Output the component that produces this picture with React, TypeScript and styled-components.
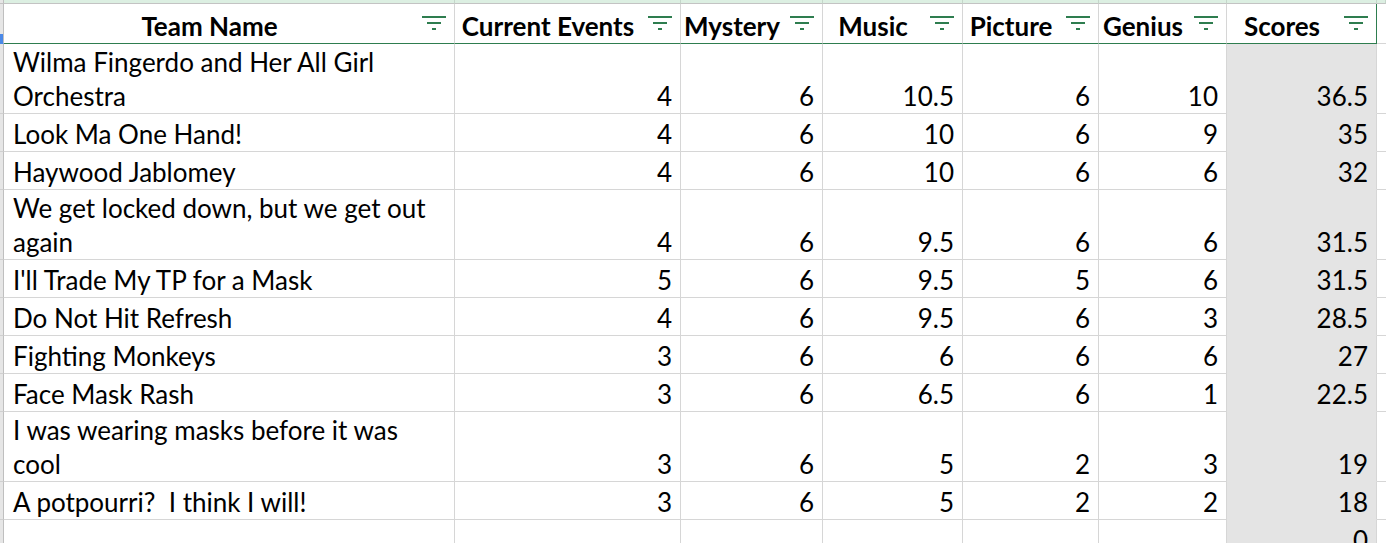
import React from "react";
import styled, { createGlobalStyle, css } from "styled-components";

const COLS = "4px 451px 226px 142px 140px 136px 128px 150px 1fr";
const GRID = "#d6d6d6";
const GREEN = "#2e7d4f";

const GlobalStyle = createGlobalStyle`
  html, body { margin: 0; padding: 0; background: #ffffff; overflow: hidden; }
  body { font-family: Lato, "Open Sans", sans-serif; color: #000; }
  * { box-sizing: border-box; }
`;

const Sheet = styled.div`
  display: flex;
  flex-direction: column;
  width: 1386px;
  height: 543px;
  overflow: hidden;
`;

const Row = styled.div<{ $h: number }>`
  display: grid;
  grid-template-columns: ${COLS};
  height: ${(p) => p.$h}px;
  flex: none;
`;

const StripCell = styled.div<{ $corner?: boolean }>`
  background: ${(p) => (p.$corner ? "#e6e6e6" : "#dcefe2")};
  border-right: 1px solid ${(p) => (p.$corner ? "#bfbfbf" : "#c5d6ca")};
  border-bottom: 1px solid #c3c3c3;
`;

const Gutter = styled.div<{ $marker?: boolean }>`
  background: ${(p) =>
    p.$marker
      ? "linear-gradient(to bottom, #e6e6e6 0, #e6e6e6 30px, #4a89e8 30px, #4a89e8 100%)"
      : "#e6e6e6"};
  border-right: 1px solid #bfbfbf;
  border-bottom: 1px solid ${(p) => (p.$marker ? "#4a89e8" : "#d0d0d0")};
`;

const HeaderCell = styled.div<{ $edge?: boolean }>`
  display: grid;
  grid-template-columns: 1fr 39px;
  border-right: 1px solid ${(p) => (p.$edge ? GREEN : GRID)};
  border-bottom: 1px solid ${GREEN};
  min-width: 0;
`;

const HeaderLabel = styled.div`
  align-self: end;
  text-align: center;
  font-weight: 700;
  font-size: 26px;
  line-height: 33px;
  padding-bottom: 0;
  white-space: nowrap;
  overflow: visible;
  min-width: 0;
`;

const FilterButton = styled.div`
  display: flex;
  justify-content: flex-end;
  align-items: flex-start;
  padding: 12px 8px 0 0;
`;

const BlankHeader = styled.div`
  border-bottom: 1px solid ${GRID};
`;

const NameCell = styled.div`
  display: flex;
  flex-direction: column;
  justify-content: flex-end;
  padding: 0 0 0 9px;
  font-size: 26px;
  line-height: 34px;
  border-right: 1px solid ${GRID};
  border-bottom: 1px solid ${GRID};
  white-space: nowrap;
  overflow: hidden;
`;

const NumCell = styled.div<{ $shaded?: boolean }>`
  display: flex;
  flex-direction: column;
  justify-content: flex-end;
  text-align: right;
  padding: 0 8px 0 0;
  font-size: 26px;
  line-height: 34px;
  border-right: 1px solid ${GRID};
  border-bottom: 1px solid ${GRID};
  white-space: nowrap;
  ${(p) =>
    p.$shaded &&
    css`
      background: #e4e4e4;
      border-bottom-color: #e4e4e4;
    `}
`;

const BlankCell = styled.div`
  border-bottom: 1px solid ${GRID};
`;

const FilterIcon = () => (
  <svg width="24" height="14" viewBox="0 0 24 14" aria-hidden="true">
    <rect x="0" y="0" width="24" height="2" fill={GREEN} />
    <rect x="5" y="6" width="14" height="2" fill={GREEN} />
    <rect x="10" y="12" width="4" height="2" fill={GREEN} />
  </svg>
);

const HEADERS = ["Team Name", "Current Events", "Mystery", "Music", "Picture", "Genius", "Scores"];

type Team = { name: string[]; scores: (number | string)[]; total: number | string };

const TEAMS: Team[] = [
  { name: ["Wilma Fingerdo and Her All Girl", "Orchestra"], scores: [4, 6, 10.5, 6, 10], total: 36.5 },
  { name: ["Look Ma One Hand!"], scores: [4, 6, 10, 6, 9], total: 35 },
  { name: ["Haywood Jablomey"], scores: [4, 6, 10, 6, 6], total: 32 },
  { name: ["We get locked down, but we get out", "again"], scores: [4, 6, 9.5, 6, 6], total: 31.5 },
  { name: ["I'll Trade My TP for a Mask"], scores: [5, 6, 9.5, 5, 6], total: 31.5 },
  { name: ["Do Not Hit Refresh"], scores: [4, 6, 9.5, 6, 3], total: 28.5 },
  { name: ["Fighting Monkeys"], scores: [3, 6, 6, 6, 6], total: 27 },
  { name: ["Face Mask Rash"], scores: [3, 6, 6.5, 6, 1], total: 22.5 },
  { name: ["I was wearing masks before it was", "cool"], scores: [3, 6, 5, 2, 3], total: 19 },
  { name: ["A potpourri?\u00a0 I think I will!"], scores: [3, 6, 5, 2, 2], total: 18 },
  { name: [""], scores: ["", "", "", "", ""], total: 0 },
];

export default function App() {
  return (
    <>
      <GlobalStyle />
      <Sheet>
        <Row $h={4}>
          <StripCell $corner />
          {HEADERS.map((h) => (
            <StripCell key={h} />
          ))}
          <StripCell />
        </Row>
        <Row $h={40}>
          <Gutter $marker />
          {HEADERS.map((h, i) => (
            <HeaderCell key={h} $edge={i === HEADERS.length - 1}>
              <HeaderLabel>{h}</HeaderLabel>
              <FilterButton>
                <FilterIcon />
              </FilterButton>
            </HeaderCell>
          ))}
          <BlankHeader />
        </Row>
        {TEAMS.map((t, r) => (
          <Row key={r} $h={t.name.length > 1 ? 70 : 38}>
            <Gutter />
            <NameCell>
              {t.name.map((line, i) => (
                <div key={i}>{line}</div>
              ))}
            </NameCell>
            {t.scores.map((s, i) => (
              <NumCell key={i}>{s}</NumCell>
            ))}
            <NumCell $shaded>{t.total}</NumCell>
            <BlankCell />
          </Row>
        ))}
      </Sheet>
    </>
  );
}
